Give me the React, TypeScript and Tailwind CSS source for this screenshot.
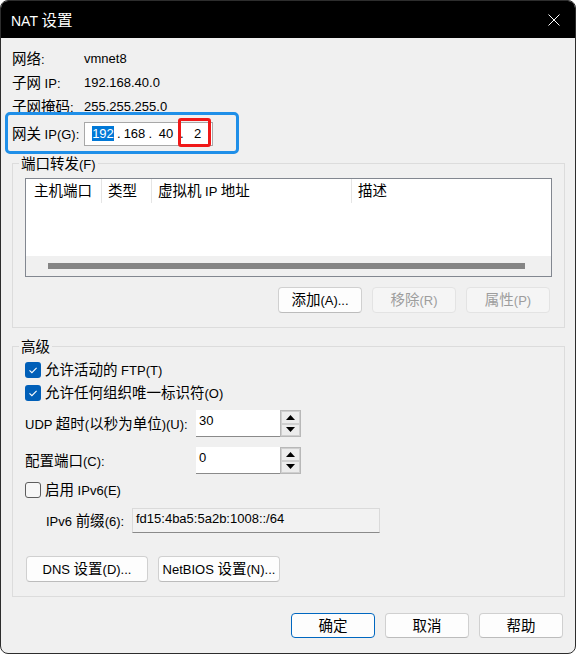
const CJK = /([\u2E80-\u9FFF\uF900-\uFAFF\uFF00-\uFFEF]+)/;

// latin runs at 13px, CJK runs a bit larger, like the Windows fallback does
function T({ s, big }: { s: string; big?: boolean }) {
  return (
    <span>
      {s.split(CJK).map((part, i) =>
        CJK.test(part) ? (
          <span
            key={i}
            className={
              big
                ? "font-['Noto_Sans_CJK_SC'] text-[15.5px]"
                : "font-['Noto_Sans_CJK_SC'] text-[14.5px]"
            }
          >
            {part}
          </span>
        ) : (
          <span key={i}>{part}</span>
        )
      )}
    </span>
  );
}

function Btn({
  label,
  className = "",
  disabled,
  primary,
}: {
  label: string;
  className?: string;
  disabled?: boolean;
  primary?: boolean;
}) {
  const look = disabled
    ? "bg-[#f5f5f5] border-[#e3e3e3] text-[#9d9d9d]"
    : primary
    ? "bg-[#fdfdfd] border-[#0067c0] text-black"
    : "bg-[#fdfdfd] border-[#d0d0d0] border-b-[#bcbcbc] text-black";
  return (
    <div
      className={`flex items-center justify-center rounded-[4px] border ${look} ${className}`}
    >
      <T s={label} />
    </div>
  );
}

function Check({ checked }: { checked?: boolean }) {
  if (checked) {
    return (
      <div className="w-[16px] h-[16px] rounded-[3px] bg-[#005fb8] flex items-center justify-center">
        <svg width="12" height="12" viewBox="0 0 12 12">
          <path d="M2.5 6.3l2.4 2.4L9.6 3.8" stroke="white" strokeWidth="1.1" fill="none" />
        </svg>
      </div>
    );
  }
  return <div className="w-[16px] h-[16px] rounded-[3px] border border-[#5d5d5d] bg-[#f6f6f6]" />;
}

function Spin({ v }: { v: string }) {
  return (
    <div className="flex h-[27px]">
      <div className="w-[84px] bg-white border-b border-[#8a8a8a] pl-[3px] pt-[2px]">{v}</div>
      <div className="w-[21px] flex flex-col border border-[#b8b8b8] bg-[#f0f0f0]">
        <div className="flex-1 flex items-center justify-center border border-[#cfcfcf] bg-[#ececec]">
          <svg width="9" height="5" viewBox="0 0 9 5">
            <path d="M0 5L4.5 0L9 5Z" fill="black" />
          </svg>
        </div>
        <div className="flex-1 flex items-center justify-center border border-[#cfcfcf] bg-[#ececec]">
          <svg width="9" height="5" viewBox="0 0 9 5">
            <path d="M0 0L9 0L4.5 5Z" fill="black" />
          </svg>
        </div>
      </div>
    </div>
  );
}

export default function App() {
  return (
    <div className="w-[576px] h-[654px] bg-white font-['Liberation_Sans','Noto_Sans_CJK_SC',sans-serif] text-[13px] leading-[18px] text-black">
      <div className="h-full flex flex-col rounded-[8px] border border-[#2d2d2d] overflow-hidden bg-[#f0f0f0]">
        <div className="h-[37px] shrink-0 bg-black text-white flex items-center justify-between pl-[10px] pr-[15px]">
          <span className="text-[14px]">
            <T s="NAT 设置" big />
          </span>
          <svg width="12" height="12" viewBox="0 0 12 12">
            <path d="M0.5 0.5L11.5 11.5M11.5 0.5L0.5 11.5" stroke="white" strokeWidth="1" />
          </svg>
        </div>

        <div className="flex-1 flex flex-col pl-[11px] pr-[10px] pt-[9px]">
          <div className="h-6 flex items-center">
            <span className="w-[72px]"><T s="网络:" /></span>
            <span>vmnet8</span>
          </div>
          <div className="h-6 flex items-center">
            <span className="w-[72px]"><T s="子网 IP:" /></span>
            <span>192.168.40.0</span>
          </div>
          <div className="h-6 flex items-center">
            <span className="w-[72px]"><T s="子网掩码:" /></span>
            <span>255.255.255.0</span>
          </div>

          <div className="relative mt-[2px] h-[26px] flex items-center">
            <span className="w-[72px]"><T s="网关 IP(G):" /></span>
            <div className="h-[24px] w-[129px] bg-white border border-[#a8a8a8] flex items-center pl-[6px]">
              <span className="w-[24px] text-center">
                <span className="bg-[#0078d7] text-white">192</span>
              </span>
              <span className="w-[7.5px] text-center">.</span>
              <span className="w-[24px] text-center">168</span>
              <span className="w-[7.5px] text-center">.</span>
              <span className="w-[24px] text-center">40</span>
              <span className="w-[7.5px] text-center">.</span>
              <span className="w-[24px] text-center">2</span>
            </div>
            {/* annotation boxes drawn over the screenshot */}
            <div className="absolute left-[-7px] top-[-9px] w-[234px] h-[42px] border-[3px] border-[#1f8fe8] rounded-[5px]" />
            <div className="absolute left-[166px] top-[-3px] w-[33px] h-[29px] border-[3px] border-[#f01818] rounded-[3px]" />
          </div>

          <fieldset className="mt-[7px] border border-[#dcdcdc] p-0">
            <legend className="ml-[6px] px-[2px] h-[18px] leading-[18px]">
              <T s="端口转发(F)" />
            </legend>
            <div className="px-[12px] pt-[6px] pb-[14px]">
              <div className="h-[99px] border border-[#828790] bg-white flex flex-col">
                <div className="h-[24px] flex">
                  <div className="w-[76px] pl-[8px] border-r border-[#e5e5e5] flex items-center"><T s="主机端口" /></div>
                  <div className="w-[50px] pl-[6px] border-r border-[#e5e5e5] flex items-center"><T s="类型" /></div>
                  <div className="w-[200px] pl-[6px] border-r border-[#e5e5e5] flex items-center"><T s="虚拟机 IP 地址" /></div>
                  <div className="flex-1 pl-[6px] flex items-center"><T s="描述" /></div>
                </div>
                <div className="mt-auto h-[20px] bg-[#f0f0f0] pt-[7px] pl-[22px]">
                  <div className="h-[6px] w-[477px] bg-[#858585]" />
                </div>
              </div>
              <div className="mt-[10px] flex justify-end gap-[10px] pr-[2px]">
                <Btn label="添加(A)..." className="w-[84px] h-[26px]" />
                <Btn label="移除(R)" className="w-[84px] h-[26px]" disabled />
                <Btn label="属性(P)" className="w-[84px] h-[26px]" disabled />
              </div>
            </div>
          </fieldset>

          <fieldset className="mt-[9px] border border-[#dcdcdc] p-0">
            <legend className="ml-[6px] px-[2px] h-[18px] leading-[18px]">
              <T s="高级" />
            </legend>
            <div className="px-[12px] pt-[3px] pb-[14px]">
              <div className="h-[23px] flex items-center gap-[4px]">
                <Check checked />
                <T s="允许活动的 FTP(T)" />
              </div>
              <div className="h-[23px] flex items-center gap-[4px]">
                <Check checked />
                <T s="允许任何组织唯一标识符(O)" />
              </div>
              <div className="mt-[6px] h-[27px] flex items-center">
                <span className="w-[171px]"><T s="UDP 超时(以秒为单位)(U):" /></span>
                <Spin v="30" />
              </div>
              <div className="mt-[10px] h-[27px] flex items-center">
                <span className="w-[171px]"><T s="配置端口(C):" /></span>
                <Spin v="0" />
              </div>
              <div className="mt-[4px] h-[23px] flex items-center gap-[4px]">
                <Check />
                <T s="启用 IPv6(E)" />
              </div>
              <div className="mt-[7px] h-[25px] flex items-center">
                <span className="ml-[21px] w-[86px]"><T s="IPv6 前缀(6):" /></span>
                <div className="h-[25px] w-[248px] bg-[#f2f2f2] border border-[#dadada] border-b-[#8a8a8a] pl-[3px] pt-[1px]">
                  fd15:4ba5:5a2b:1008::/64
                </div>
              </div>
              <div className="mt-[23px] ml-[1px] flex gap-[10px]">
                <Btn label="DNS 设置(D)..." className="w-[122px] h-[26px]" />
                <Btn label="NetBIOS 设置(N)..." className="w-[122px] h-[26px]" />
              </div>
            </div>
          </fieldset>

          <div className="mt-[16px] flex justify-end gap-[10px] pr-[2px]">
            <Btn label="确定" className="w-[84px] h-[25px]" primary />
            <Btn label="取消" className="w-[84px] h-[25px]" />
            <Btn label="帮助" className="w-[84px] h-[25px]" />
          </div>
        </div>
      </div>
    </div>
  );
}
